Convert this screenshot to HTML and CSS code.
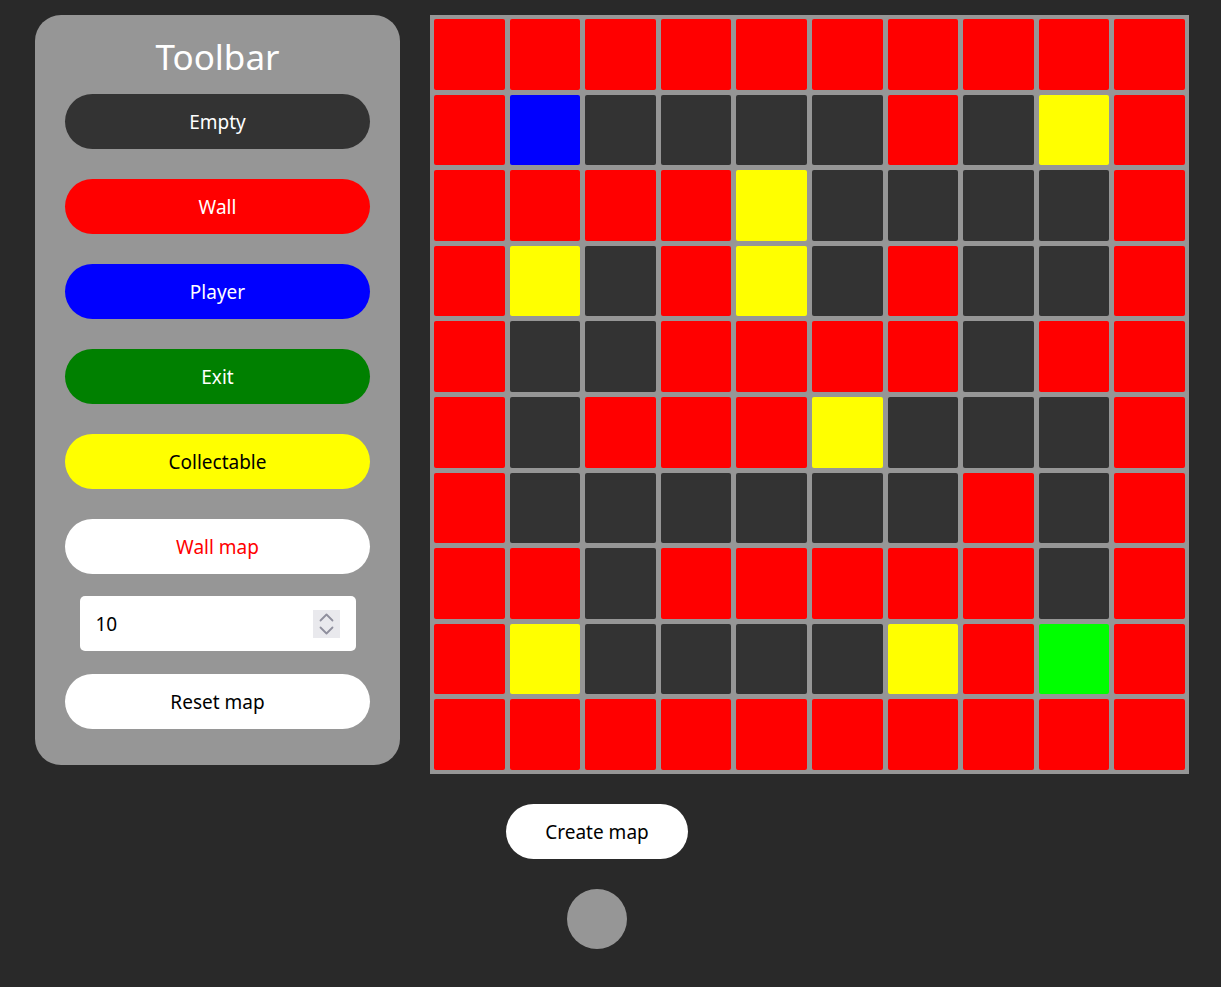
FILE: index.html
```html
<!DOCTYPE html>
<html lang="en">
<head>
<meta charset="utf-8">
<title>Map editor</title>
<link rel="stylesheet" href="styles.css">
</head>
<body>
<div class="page">
  <div class="main">
    <aside class="toolbar">
      <h1 class="title">Toolbar</h1>
      <button class="tool tool-empty">Empty</button>
      <button class="tool tool-wall">Wall</button>
      <button class="tool tool-player">Player</button>
      <button class="tool tool-exit">Exit</button>
      <button class="tool tool-collect">Collectable</button>
      <button class="tool tool-light tool-wallmap">Wall map</button>
      <label class="number">
        <input class="number-input" type="text" value="10">
        <span class="spinner">
          <svg width="27" height="28" viewBox="0 0 27 28">
            <path d="M7.5 10.5 L13.5 4.5 L19.5 10.5" fill="none" stroke="#8f8f9d" stroke-width="1.8" stroke-linecap="round" stroke-linejoin="round"/>
            <path d="M7.5 17.5 L13.5 23.5 L19.5 17.5" fill="none" stroke="#8f8f9d" stroke-width="1.8" stroke-linecap="round" stroke-linejoin="round"/>
          </svg>
        </span>
      </label>
      <button class="tool tool-light tool-reset">Reset map</button>
    </aside>
    <div class="grid" id="grid"></div>
  </div>
  <div class="bottom">
    <button class="create">Create map</button>
    <div class="dot"></div>
  </div>
</div>
<script src="script.js"></script>
</body>
</html>
```
FILE: styles.css
```css
* { box-sizing: border-box; }
html, body { margin: 0; padding: 0; }
body {
  background: #292929;
  font-family: "Noto Sans", "Open Sans", sans-serif;
  width: 1221px;
  height: 987px;
  overflow: hidden;
}
.page { padding-top: 15px; }
.main {
  display: flex;
  align-items: flex-start;
  padding-left: 35px;
  gap: 30px;
}
.toolbar {
  width: 365px;
  height: 750px;
  background: #969696;
  border-radius: 26px;
  padding: 20px 30px 36px;
  display: flex;
  flex-direction: column;
  align-items: center;
}
.title {
  margin: 0 0 15px;
  height: 44px;
  line-height: 44px;
  font-size: 35px;
  font-weight: 400;
  color: #fff;
}
.tool {
  width: 305px;
  height: 55px;
  flex: none;
  border: none;
  border-radius: 28px;
  font-family: inherit;
  font-size: 19px;
  color: #fff;
  margin-bottom: 30px;
  padding: 0;
}
.tool-empty { background: #333333; }
.tool-wall { background: #ff0000; }
.tool-player { background: #0000ff; }
.tool-exit { background: #008000; }
.tool-collect { background: #ffff00; color: #000; }
.tool-light { background: #fff; color: #000; }
.tool-wallmap { color: #ff0000; margin-bottom: 22px; }
.tool-reset { margin-bottom: 0; }
.number {
  width: 276px;
  height: 55px;
  background: #fff;
  border-radius: 5px;
  display: flex;
  align-items: center;
  padding: 0 16px 0 16px;
  margin-bottom: 23px;
}
.number-input {
  flex: 1;
  min-width: 0;
  border: none;
  outline: none;
  background: transparent;
  font-family: inherit;
  font-size: 19px;
  color: #000;
  padding: 0;
}
.spinner {
  width: 27px;
  height: 28px;
  background: #e9e9ed;
  display: block;
  flex: none;
}
.spinner svg { display: block; }
.grid {
  width: 759px;
  height: 759px;
  border: 4.5px solid #969696;
  background: #969696;
  display: grid;
  grid-template-columns: repeat(10, 1fr);
  grid-template-rows: repeat(10, 1fr);
  gap: 5px;
}
.cell { border-radius: 2px; }
.c-R { background: #ff0000; }
.c-D { background: #333333; }
.c-B { background: #0000ff; }
.c-Y { background: #ffff00; }
.c-G { background: #00ff00; }
.bottom {
  width: 1194px;
  display: flex;
  flex-direction: column;
  align-items: center;
  padding-top: 30px;
  gap: 30px;
}
.create {
  width: 182px;
  height: 55px;
  border: none;
  border-radius: 28px;
  background: #fff;
  color: #000;
  font-family: inherit;
  font-size: 19px;
  padding: 0;
}
.dot {
  width: 60px;
  height: 60px;
  border-radius: 50%;
  background: #969696;
}
```
FILE: script.js
```js
const rows = [
  "RRRRRRRRRR",
  "RBDDDDRDYR",
  "RRRRYDDDDR",
  "RYDRYDRDDR",
  "RDDRRRRDRR",
  "RDRRRYDDDR",
  "RDDDDDDRDR",
  "RRDRRRRRDR",
  "RYDDDDYRGR",
  "RRRRRRRRRR"
];
const grid = document.getElementById("grid");
rows.forEach(r => {
  for (const ch of r) {
    const d = document.createElement("div");
    d.className = "cell c-" + ch;
    grid.appendChild(d);
  }
});
```
